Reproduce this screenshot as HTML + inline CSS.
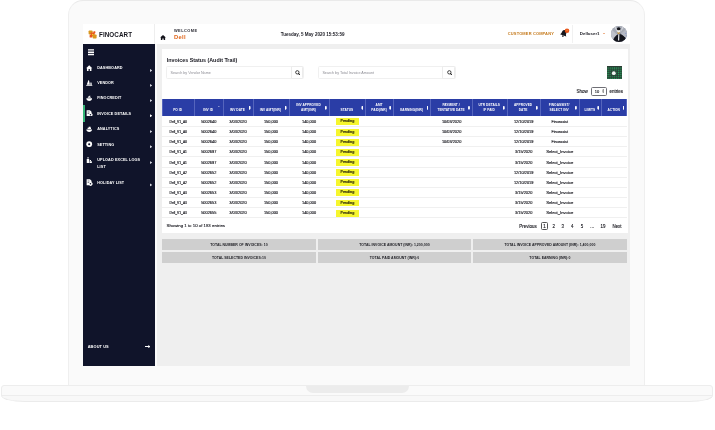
<!DOCTYPE html>
<html lang="en">
<head>
<meta charset="utf-8">
<title>Finocart - Invoices Status (Audit Trail)</title>
<style>
*{box-sizing:border-box;margin:0;padding:0}
html,body{width:715px;height:430px;background:#fff;overflow:hidden}
body{position:relative;font-family:"Liberation Sans",sans-serif;color:#1b1b22}
.abs{position:absolute}
/* laptop */
.lid{position:absolute;left:68px;top:0;width:577px;height:388px;background:#fafafa;border:1px solid #efefef;border-top-color:#eaeaea;border-radius:15px 15px 0 0}
.base{position:absolute;left:1px;top:385px;width:712px;height:11px;background:#fafafa;border:1px solid #ededed;border-radius:3px 3px 0 0}
.base2{position:absolute;left:1px;top:395px;width:712px;height:6.5px;background:#f8f8f8;border:1px solid #ebebeb;border-top:1px solid #efefef;border-radius:0 0 24px 24px / 0 0 6.5px 6.5px}
.notch{position:absolute;left:306px;top:385.5px;width:103px;height:7.5px;background:#ececec;border-radius:0 0 7px 7px}
/* screen */
.screen{position:absolute;left:83px;top:24px;width:547px;height:342px;background:#efefef;overflow:hidden;will-change:transform}
.header{position:absolute;left:0;top:0;width:547px;height:20.3px;background:#fff}
.logo{position:absolute;left:0;top:0;width:72px;height:20.3px;border-right:1px solid #eee}
.logo b{position:absolute;left:16.2px;top:7.3px;font-size:6.9px;line-height:8px;letter-spacing:.1px;transform:scaleX(.91);transform-origin:0 50%;font-weight:bold;color:#14141c}
.welcome{position:absolute;left:91px;top:5.3px;font-size:3.9px;line-height:4.4px;letter-spacing:.45px;font-weight:bold;color:#2a2a33}
.dell{position:absolute;left:91px;top:9.7px;font-size:5.8px;line-height:6px;letter-spacing:.3px;font-weight:bold;color:#e0661a}
.date{position:absolute;left:197.7px;top:7.9px;font-size:4.55px;line-height:5px;font-weight:bold;color:#1c1c24;white-space:nowrap}
.cust{position:absolute;left:424.8px;top:7.1px;font-size:4px;line-height:5px;font-weight:bold;color:#c57a1c;white-space:nowrap;letter-spacing:.13px}
.vsep{position:absolute;left:489px;top:1px;width:1px;height:18px;background:#f1f1f1}
.user{position:absolute;left:496.8px;top:7.1px;font-size:4.4px;line-height:5px;font-weight:bold;color:#1c1c24;white-space:nowrap}
.caret{position:absolute;left:520.3px;top:9.2px;width:0;height:0;border-left:1.2px solid transparent;border-right:1.2px solid transparent;border-top:1.6px solid #e0661a}
.avatar{position:absolute;left:527.5px;top:1.9px;width:16.6px;height:16.6px;border-radius:50%;overflow:hidden;background:#9aa0ad}
/* sidebar */
.side{position:absolute;left:0;top:20.3px;width:72px;height:321.7px;background:#10142a}
.side ul{list-style:none}
.side li{position:absolute;left:0;width:72px;height:15px}
.side li span{position:absolute;left:14.2px;top:0;font-size:3.75px;line-height:6.7px;font-weight:bold;color:#fff;letter-spacing:.12px;white-space:nowrap}
.side li i{position:absolute;left:66.7px;top:3.4px;width:2.6px;height:3.4px;background:#d4d6df;clip-path:polygon(0 0,100% 50%,0 100%)}
.side li svg{position:absolute;left:3.4px;top:-0.6px;width:6.4px;height:6.4px}
.side li.act:before{content:"";position:absolute;left:0;top:-6.2px;width:1.7px;height:17.4px;background:#35b577}
.about{position:absolute;left:4.7px;top:299.6px;font-size:3.9px;line-height:5px;font-weight:bold;color:#fff;letter-spacing:.1px}
/* main */
.strip{position:absolute;left:72px;top:20.3px;width:2.2px;height:322px;background:#fbfbfb}
.card{position:absolute;left:78.5px;top:25px;width:466px;height:184.2px;background:#fff}
.title{position:absolute;left:5.3px;top:7.6px;font-size:5.35px;line-height:6px;font-weight:bold;color:#17171f;white-space:nowrap}
.inp{position:absolute;top:17.2px;height:12.6px;width:137.5px;border:1px solid #f0f0f0;border-radius:1.5px;background:#fff}
.inp span{position:absolute;left:3.3px;top:4.1px;font-size:3.7px;line-height:4px;color:#8d8d95;white-space:nowrap}
.inp em{position:absolute;right:0;top:-1px;width:12.3px;height:12.6px;border:1px solid #ececec;border-radius:0 1.5px 1.5px 0}
.inp svg{position:absolute;right:2.5px;top:2.7px;width:5.6px;height:5.6px}
.xls{position:absolute;left:445.4px;top:17px;width:15px;height:13px;background:#2b3d34;overflow:hidden}
.show{position:absolute;top:39.9px;font-size:4.5px;line-height:5px;color:#15151c;-webkit-text-stroke:.12px #15151c;white-space:nowrap}
.sel{position:absolute;left:429px;top:38.2px;width:16.4px;height:8.4px;border:1px solid #6f6f76;border-radius:1.6px;background:#fff}
.sel span{position:absolute;left:3.2px;top:1.4px;font-size:4px;line-height:4.2px;color:#15151c;-webkit-text-stroke:.12px #15151c}
.sel i{position:absolute;right:1.9px;top:1.3px;width:2.4px;height:4px}
table{position:absolute;left:0px;top:49.8px;width:465px;border-collapse:collapse;table-layout:fixed}
th{background:#2a3da6;color:#fff;font-size:3.2px;line-height:4.4px;font-weight:bold;height:17.6px;vertical-align:bottom;padding:0 2.6px 4.1px 1.4px;border-left:1px solid #5565bd;border-right:1px solid #5565bd;text-align:center;position:relative;white-space:nowrap;letter-spacing:.05px}
th:after{content:"";position:absolute;right:2px;bottom:6.4px;width:1.8px;height:4.4px;background:#fff;clip-path:polygon(50% 0,100% 28%,100% 72%,50% 100%,0 72%,0 28%)}
th.ns:after{display:none}
th.up:after{width:0;height:0;background:none;border-radius:0;border-left:1.1px solid transparent;border-right:1.1px solid transparent;border-bottom:1.6px solid #fff;bottom:9.4px;right:2.8px}
td{height:10.14px;font-size:3.9px;line-height:4px;text-align:center;color:#15151c;-webkit-text-stroke:.14px #15151c;border-bottom:1px solid #f0f0f0;padding:1.1px 0 0;white-space:nowrap}
td:first-child{font-size:3.3px}
td:nth-child(12){font-size:4.15px}
tr.fa td:nth-child(12){font-size:3.65px}
td b{display:inline-block;background:#f6f62e;color:#4a4300;font-weight:bold;width:23px;height:6.8px;line-height:6.8px;font-size:3.5px}
.info{position:absolute;left:5px;top:173.8px;font-size:4.33px;line-height:5px;color:#15151c;-webkit-text-stroke:.12px #15151c;white-space:nowrap}
.pg{position:absolute;top:174.5px;font-size:4.45px;line-height:5px;color:#15151c;-webkit-text-stroke:.12px #15151c;white-space:nowrap;transform:translateX(-50%)}
.pgbox{position:absolute;left:379.1px;top:173.2px;width:7.7px;height:8.1px;border:1px solid #555;border-radius:1.5px}
.tot{position:absolute;height:11px;background:#cfcfcf;font-size:3.47px;line-height:12.4px;font-weight:bold;color:#1a1a20;text-align:center;white-space:nowrap;letter-spacing:.03px}
</style>
</head>
<body>
<div class="lid"></div>
<div class="base2"></div>
<div class="base"></div>
<div class="notch"></div>

<div class="screen">
  <header class="header">
    <div class="logo">
      <svg class="abs" style="left:4.8px;top:5.7px;width:9.2px;height:9px" viewBox="0 0 18 18">
        <rect x="1" y="1" width="8" height="8" rx="1.5" fill="#d9971f"/>
        <rect x="5" y="5" width="8" height="8" rx="1.5" fill="#e8541d"/>
        <rect x="9" y="9" width="8" height="8" rx="1.5" fill="#d9971f"/>
        <rect x="3" y="10" width="5" height="5" rx="1" fill="#e8541d"/>
        <rect x="10.5" y="2.5" width="4" height="4" rx="1" fill="#e8541d"/>
        <circle cx="9" cy="9" r="1.6" fill="#f5d21f"/>
      </svg>
      <b>FINOCART</b>
    </div>
    <svg class="abs" style="left:77.1px;top:10.7px;width:6px;height:5.3px" viewBox="0 0 12 11"><path d="M6 0 L12 5.4 H10.4 V11 H7.3 V7.2 H4.7 V11 H1.6 V5.4 H0 Z" fill="#14141c"/></svg>
    <div class="welcome">WELCOME</div>
    <div class="dell">Dell</div>
    <div class="date">Tuesday, 5 May 2020 15:53:59</div>
    <div class="cust">CUSTOMER COMPANY</div>
    <svg class="abs" style="left:476.5px;top:4px;width:10px;height:10px" viewBox="0 0 10 10">
      <g transform="rotate(20 3.9 5.2)">
        <path d="M3.9 1.9 C2 1.9 1.6 3.5 1.6 4.9 C1.6 6.3 1 6.9 0.5 7.5 H7.3 C6.8 6.9 6.2 6.3 6.2 4.9 C6.2 3.5 5.8 1.9 3.9 1.9 Z" fill="#17171f"/>
        <circle cx="3.9" cy="8.2" r="0.85" fill="#17171f"/>
      </g>
      <circle cx="7" cy="2.7" r="2.3" fill="#e8561c"/>
      <circle cx="7" cy="2.5" r="0.8" fill="#f08a3c"/>
    </svg>
    <div class="vsep"></div>
    <div class="user">Delluser1</div>
    <div class="caret"></div>
    <div class="avatar">
      <svg viewBox="0 0 32 32" width="16.6" height="16.6">
        <rect width="32" height="32" fill="#a7abb5"/>
        <path d="M0 6 L12 17 L0 28 Z" fill="#bfc2ca"/><path d="M32 4 L19 15 L32 26 Z" fill="#b5b9c4"/>
        <path d="M5 0 L13 13 L9 0 Z M27 0 L18 12 L22 0 Z" fill="#cfd2d9"/>
        <path d="M3 32 C4 25 8 18 14.8 15.2 C18 15.6 21 17 23 19 L31 27 L30 32 Z" fill="#14151c"/>
        <path d="M17 14 L31 25 L30 29 L19 19 Z" fill="#14151c"/>
        <path d="M13.9 16 L16.2 16 L15.8 28 L13.6 28 Z" fill="#eef0f4"/>
        <ellipse cx="14.8" cy="9.2" rx="3" ry="3.6" fill="#f1f0ea"/>
        <path d="M12 11.5 C12.6 16.5 17 16.5 17.6 11.5 C16.6 13.6 13 13.6 12 11.5 Z" fill="#c98d22"/>
        <ellipse cx="14.8" cy="5.4" rx="3.5" ry="2.9" fill="#121319"/>
        <circle cx="28.6" cy="14" r="0.9" fill="#4a6fd0"/><circle cx="29.4" cy="19" r="0.9" fill="#4a6fd0"/><circle cx="27.6" cy="24" r="0.9" fill="#4a6fd0"/>
      </svg>
    </div>
  </header>

  <nav class="side">
    <svg class="abs" style="left:5px;top:5px;width:6.2px;height:6.4px" viewBox="0 0 12.4 12.8"><path d="M0 0.4H12.4V3.2H0ZM0 5H12.4V7.8H0ZM0 9.6H12.4V12.4H0Z" fill="#fff"/></svg>
    <ul>
      <li style="top:21.1px"><svg viewBox="0 0 12 12"><path d="M6 0.6 L11.8 6 H10.2 V11.4 H7.2 V7.6 H4.8 V11.4 H1.8 V6 H0.2 Z" fill="#fff"/></svg><span>DASHBOARD</span><i></i></li>
      <li style="top:36.0px"><svg viewBox="0 0 12 12"><path d="M4.4 0.6 L5.6 0.6 L7.4 9 H1.4 Z M8.8 4.4 H9.8 L11.4 9 H7.6 Z M0.4 9.8 H11.8 V11.6 H0.4 Z" fill="#fff"/></svg><span>VENDOR</span><i></i></li>
      <li style="top:51.2px"><svg viewBox="0 0 12 12"><path d="M0.6 6.2 H11.4 C11.4 9.4 9 11.2 6 11.2 C3 11.2 0.6 9.4 0.6 6.2 Z M3.2 5.2 C3.2 3.2 4.6 2.2 6.4 2.2 L7 0.8 L8.2 1.2 L7.6 2.6 C8.6 3.2 9 4.2 9 5.2 Z" fill="#fff"/></svg><span>FINOCREDIT</span><i></i></li>
      <li style="top:66.4px" class="act"><svg viewBox="0 0 12 12"><path d="M1.2 0.4 H7.4 L10.4 3.4 V6 A3.6 3.6 0 1 1 6 11.6 H1.2 Z" fill="#fff"/><circle cx="8.4" cy="8.8" r="1.5" fill="#10142a"/><path d="M3 3.2H6.6V4.2H3ZM3 5.6H6V6.6H3Z" fill="#10142a"/></svg><span>INVOICE DETAILS</span><i style="background:#fff"></i></li>
      <li style="top:82.2px"><svg viewBox="0 0 12 12"><path d="M0.6 6.6 H11.4 C11.4 9.6 9 11.2 6 11.2 C3 11.2 0.6 9.6 0.6 6.6 Z M3 5.6 V3.2 H5 V1.4 H8.6 V3.2 H9.4 V5.6 Z" fill="#fff"/></svg><span>ANALYTICS</span><i></i></li>
      <li style="top:97.4px"><svg viewBox="0 0 12 12"><circle cx="6" cy="6" r="5.4" fill="#fff"/><circle cx="6" cy="6" r="2" fill="#10142a"/></svg><span>SETTING</span><i></i></li>
      <li style="top:113.2px"><svg viewBox="0 0 12 12"><path d="M2.6 0.6 H5 V3 H2.6Z M1.4 3.8 H6 V11.6 H1.4 Z M7.2 5.4 H9.4 V7.4 H7.2 Z M6.8 8.2 H11 V11.6 H6.8 Z" fill="#fff"/></svg><span>UPLOAD EXCEL LOGS<br>LIST</span><i></i></li>
      <li style="top:135.5px"><svg viewBox="0 0 12 12"><path d="M1.2 0.4 H7.4 L10.4 3.4 V6 A3.6 3.6 0 1 1 6 11.6 H1.2 Z" fill="#fff"/><circle cx="8.4" cy="8.8" r="1.5" fill="#10142a"/><path d="M3 3.2H6.6V4.2H3ZM3 5.6H6V6.6H3Z" fill="#10142a"/></svg><span>HOLIDAY LIST</span><i></i></li>
    </ul>
    <div class="about">ABOUT US</div>
    <svg class="abs" style="left:61.6px;top:300.6px;width:5.6px;height:3.2px" viewBox="0 0 11 6"><path d="M0 2H6.4V0L11 3L6.4 6V4H0Z" fill="#fff"/></svg>
  </nav>
  <div class="strip"></div>

  <main class="card">
    <div class="title">Invoices Status (Audit Trail)</div>
    <div class="inp" style="left:4.8px"><span>Search by Vendor Name</span><em></em>
      <svg viewBox="0 0 12 12"><circle cx="5" cy="5" r="3.6" fill="none" stroke="#222" stroke-width="1.8"/><path d="M7.6 7.6L11 11" stroke="#222" stroke-width="2.2" stroke-linecap="round"/></svg></div>
    <div class="inp" style="left:156.6px"><span>Search by Total Invoice Amount</span><em></em>
      <svg viewBox="0 0 12 12"><circle cx="5" cy="5" r="3.6" fill="none" stroke="#222" stroke-width="1.8"/><path d="M7.6 7.6L11 11" stroke="#222" stroke-width="2.2" stroke-linecap="round"/></svg></div>
    <div class="xls">
      <svg viewBox="0 0 15 13" width="15" height="13">
        <defs><pattern id="dots" width="2.14" height="2.17" patternUnits="userSpaceOnUse"><rect x=".5" y=".5" width="1.1" height="1.1" fill="#1fcb6b"/></pattern></defs>
        <rect width="15" height="13" fill="#2b3d34"/>
        <rect x="0" y="0" width="15" height="13" fill="url(#dots)"/>
        <rect x="3.4" y="3" width="7.6" height="6.6" fill="#2b3d34" opacity=".55"/>
        <circle cx="6.8" cy="6.2" r="1.9" fill="#f3f5f4"/>
      </svg>
    </div>
    <div class="show" style="left:415px">Show</div>
    <div class="sel"><span>10</span><i><svg viewBox="0 0 4 8" width="2.4" height="4" style="display:block"><path d="M2 0L4 3.2H0ZM2 8L0 4.8H4Z" fill="#333"/></svg></i></div>
    <div class="show" style="left:448px">entries</div>

    <table>
      <colgroup>
        <col style="width:32.5px"><col style="width:28.5px"><col style="width:30px"><col style="width:36px"><col style="width:40.2px"><col style="width:36.6px"><col style="width:27.8px"><col style="width:37.3px"><col style="width:41.5px"><col style="width:34.8px"><col style="width:33px"><col style="width:39.1px"><col style="width:22.4px"><col style="width:25.3px">
      </colgroup>
      <thead>
        <tr>
          <th class="ns">PO ID</th><th class="up">INV ID</th><th>INV DATE</th><th>INV AMT(INR)</th><th>INV APPROVED<br>AMT(INR)</th><th>STATUS</th><th>AMT<br>PAID(INR)</th><th>EARNING(INR)</th><th>PAYMENT /<br>TENTATIVE DATE</th><th>UTR DETAILS<br>IF PAID</th><th>APPROVED<br>DATE</th><th>FINOASSIST/<br>SELECT INV</th><th>LIMITS</th><th>ACTION</th>
        </tr>
      </thead>
      <tbody>
        <tr class="fa"><td>Dell_V1_A0</td><td>5002640</td><td>3/03/2020</td><td>150,000</td><td>140,000</td><td><b>Pending</b></td><td></td><td></td><td>10/03/2020</td><td></td><td>12/10/2019</td><td>Finoassist</td><td></td><td></td></tr>
        <tr class="fa"><td>Dell_V1_A0</td><td>5002640</td><td>3/03/2020</td><td>150,000</td><td>140,000</td><td><b>Pending</b></td><td></td><td></td><td>10/03/2020</td><td></td><td>12/10/2019</td><td>Finoassist</td><td></td><td></td></tr>
        <tr class="fa"><td>Dell_V1_A0</td><td>5002640</td><td>3/03/2020</td><td>150,000</td><td>140,000</td><td><b>Pending</b></td><td></td><td></td><td>10/03/2020</td><td></td><td>12/10/2019</td><td>Finoassist</td><td></td><td></td></tr>
        <tr><td>Dell_V1_A1</td><td>5002697</td><td>3/03/2020</td><td>150,000</td><td>140,000</td><td><b>Pending</b></td><td></td><td></td><td></td><td></td><td>3/15/2020</td><td>Select_Invoice</td><td></td><td></td></tr>
        <tr><td>Dell_V1_A1</td><td>5002697</td><td>3/03/2020</td><td>150,000</td><td>140,000</td><td><b>Pending</b></td><td></td><td></td><td></td><td></td><td>3/15/2020</td><td>Select_Invoice</td><td></td><td></td></tr>
        <tr><td>Dell_V1_A2</td><td>5002652</td><td>3/03/2020</td><td>150,000</td><td>140,000</td><td><b>Pending</b></td><td></td><td></td><td></td><td></td><td>12/10/2019</td><td>Select_Invoice</td><td></td><td></td></tr>
        <tr><td>Dell_V1_A2</td><td>5002652</td><td>3/03/2020</td><td>150,000</td><td>140,000</td><td><b>Pending</b></td><td></td><td></td><td></td><td></td><td>12/10/2019</td><td>Select_Invoice</td><td></td><td></td></tr>
        <tr><td>Dell_V1_A3</td><td>5002653</td><td>3/03/2020</td><td>150,000</td><td>140,000</td><td><b>Pending</b></td><td></td><td></td><td></td><td></td><td>3/15/2020</td><td>Select_Invoice</td><td></td><td></td></tr>
        <tr><td>Dell_V1_A3</td><td>5002653</td><td>3/03/2020</td><td>150,000</td><td>140,000</td><td><b>Pending</b></td><td></td><td></td><td></td><td></td><td>3/15/2020</td><td>Select_Invoice</td><td></td><td></td></tr>
        <tr><td>Dell_V1_A3</td><td>5002655</td><td>3/03/2020</td><td>150,000</td><td>140,000</td><td><b>Pending</b></td><td></td><td></td><td></td><td></td><td>3/15/2020</td><td>Select_Invoice</td><td></td><td></td></tr>
      </tbody>
    </table>

    <div class="info">Showing 1 to 10 of 183 entries</div>
    <div class="pg" style="left:366.5px">Previous</div>
    <div class="pgbox"></div>
    <div class="pg" style="left:382.9px">1</div>
    <div class="pg" style="left:392.2px">2</div>
    <div class="pg" style="left:401.3px">3</div>
    <div class="pg" style="left:410.8px">4</div>
    <div class="pg" style="left:420.6px">5</div>
    <div class="pg" style="left:430.7px">…</div>
    <div class="pg" style="left:441.5px">19</div>
    <div class="pg" style="left:455.5px">Next</div>
  </main>

  <div class="tot" style="left:79.2px;top:215px;width:153.5px">TOTAL NUMBER OF INVOICES: 10</div>
  <div class="tot" style="left:235.3px;top:215px;width:152.3px">TOTAL INVOICE AMOUNT (INR): 1,200,000</div>
  <div class="tot" style="left:390.1px;top:215px;width:153.6px">TOTAL INVOICE APPROVED AMOUNT (INR): 1,400,000</div>
  <div class="tot" style="left:79.2px;top:227.8px;width:153.5px">TOTAL SELECTED INVOICES:10</div>
  <div class="tot" style="left:235.3px;top:227.8px;width:152.3px">TOTAL PAID AMOUNT (INR):0</div>
  <div class="tot" style="left:390.1px;top:227.8px;width:153.6px">TOTAL EARNING (INR):0</div>
</div>
</body>
</html>
